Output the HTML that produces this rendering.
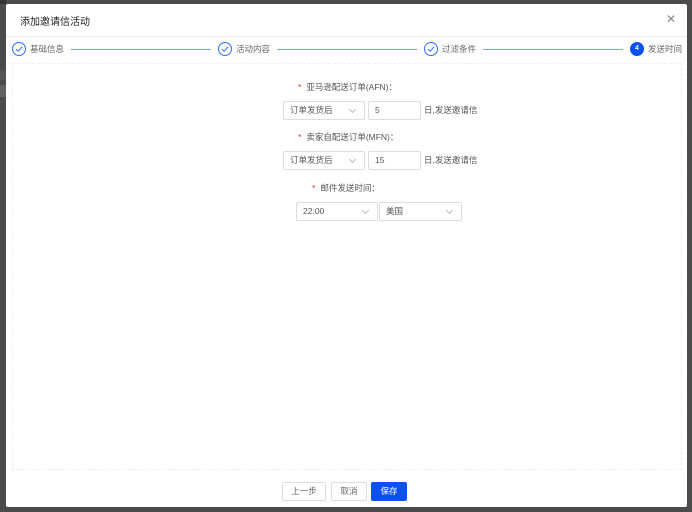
<!DOCTYPE html>
<html><head><style>
*{box-sizing:border-box;margin:0;padding:0}
body{width:692px;height:512px;background:#4b4b4b;font-family:"Liberation Sans","Noto Sans CJK SC",sans-serif;font-size:8px;color:#555;position:relative;overflow:hidden}
.bgband{position:absolute;left:0;width:6px;background:#5a5a5a}
.modal{position:absolute;left:6px;top:4px;width:681px;height:503px;background:#fff;border-radius:2px}
.title{position:absolute;left:14px;top:9px;font-size:10px;color:#222}
.close{position:absolute;right:11px;top:8px;font-size:12px;color:#888}
.hline{position:absolute;left:0;right:0;top:32px;height:1px;background:#ececec}
.step{position:absolute;top:38px;display:flex;align-items:center;font-size:8.5px;color:#666;line-height:14px}
.circ{width:14px;height:14px;border:1px solid #2f6bff;border-radius:50%;display:flex;align-items:center;justify-content:center;margin-right:4px}
.cur{background:#0b50f0;border:none;color:#fff;font-size:7px;font-weight:bold;line-height:14px;text-align:center;display:block}
.line{position:absolute;top:45px;height:1px;background:#7ea2ff}
.box{position:absolute;left:6px;top:59px;width:670px;height:407px;border:1px dashed #efefef}
.lbl{position:absolute;font-size:8.5px;color:#555;line-height:12px}
.lbl b{color:#e33;font-weight:normal;margin-right:5px}
.sel,.inp{position:absolute;height:19px;border:1px solid #ddd;border-radius:2px;font-size:8.5px;color:#555;padding:0 6px;line-height:17px;background:#fff}
.sel:after{content:"";position:absolute;right:9px;top:5px;width:4px;height:4px;border-right:1px solid #bbb;border-bottom:1px solid #bbb;transform:rotate(45deg)}
.btn{position:absolute;top:478px;height:19px;border:1px solid #ddd;border-radius:2px;font-size:8.5px;color:#666;text-align:center;line-height:17px;background:#fff}
</style></head><body>
<div class="bgband" style="top:0;height:4px;background:#333"></div>
<div class="bgband" style="top:70px;height:10px;background:#555"></div>
<div class="bgband" style="top:85px;height:12px;background:#626262"></div>
<div class="modal">
<div class="title">添加邀请信活动</div>
<div class="close">✕</div>
<div class="hline"></div>
<div class="step" style="left:6px"><div class="circ"><svg width="8" height="8" viewBox="0 0 8 8"><path d="M1 4.2L3.2 6.2 7 1.8" fill="none" stroke="#2f6bff" stroke-width="1"/></svg></div>基础信息</div>
<div class="line" style="left:65px;width:140px"></div>
<div class="step" style="left:212px"><div class="circ"><svg width="8" height="8" viewBox="0 0 8 8"><path d="M1 4.2L3.2 6.2 7 1.8" fill="none" stroke="#2f6bff" stroke-width="1"/></svg></div>活动内容</div>
<div class="line" style="left:271px;width:140px"></div>
<div class="step" style="left:418px"><div class="circ"><svg width="8" height="8" viewBox="0 0 8 8"><path d="M1 4.2L3.2 6.2 7 1.8" fill="none" stroke="#2f6bff" stroke-width="1"/></svg></div>过滤条件</div>
<div class="line" style="left:477px;width:140px"></div>
<div class="step" style="left:624px"><div class="circ cur">4</div>发送时间</div>
<div class="box"></div>
<div class="lbl" style="left:292px;top:77px"><b>*</b>亚马逊配送订单(AFN)：</div>
<div class="sel" style="left:277px;top:97px;width:82px">订单发货后</div>
<div class="inp" style="left:362px;top:97px;width:53px">5</div>
<div class="lbl" style="left:418px;top:100px">日,发送邀请信</div>
<div class="lbl" style="left:292px;top:127px"><b>*</b>卖家自配送订单(MFN)：</div>
<div class="sel" style="left:277px;top:147px;width:82px">订单发货后</div>
<div class="inp" style="left:362px;top:147px;width:53px">15</div>
<div class="lbl" style="left:418px;top:150px">日,发送邀请信</div>
<div class="lbl" style="left:306px;top:178px"><b>*</b>邮件发送时间：</div>
<div class="sel" style="left:290px;top:198px;width:82px">22:00</div>
<div class="sel" style="left:373px;top:198px;width:83px">美国</div>
<div class="btn" style="left:276px;width:44px">上一步</div>
<div class="btn" style="left:325px;width:36px">取消</div>
<div class="btn" style="left:365px;width:36px;background:#0b50f0;border-color:#0b50f0;color:#fff">保存</div>
</div>
</body></html>
